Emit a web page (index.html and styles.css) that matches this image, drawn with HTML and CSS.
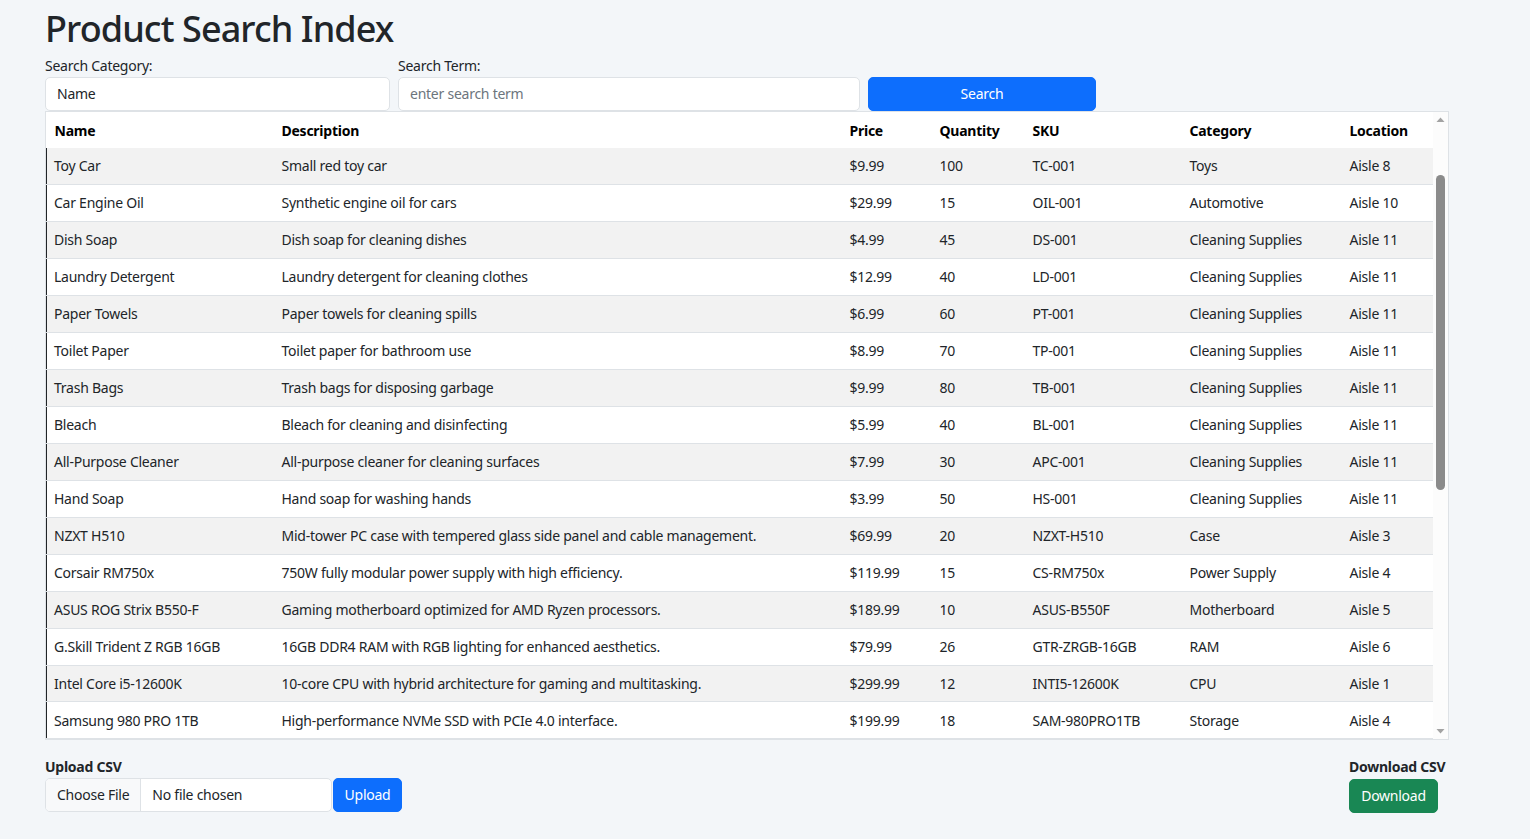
FILE: index.html
```html
<!DOCTYPE html>
<html lang="en">
<head>
<meta charset="utf-8">
<title>Product Search Index</title>
<link rel="stylesheet" href="styles.css">
</head>
<body>
<div class="page">
  <h1 class="title">Product Search Index</h1>
  <div class="search-row">
    <div class="field field-cat">
      <label class="label">Search Category:</label>
      <div class="control">Name</div>
    </div>
    <div class="field field-term">
      <label class="label">Search Term:</label>
      <input class="control input" type="text" placeholder="enter search term">
    </div>
    <div class="field field-btn">
      <button class="btn btn-primary btn-search">Search</button>
    </div>
  </div>
  <div class="table-wrap">
    <div class="scroller">
    <table class="table">
      <colgroup>
        <col class="c-name"><col class="c-desc"><col class="c-price"><col class="c-qty"><col class="c-sku"><col class="c-cat"><col class="c-loc">
      </colgroup>
      <thead>
        <tr><th>Name</th><th>Description</th><th>Price</th><th>Quantity</th><th>SKU</th><th>Category</th><th>Location</th></tr>
      </thead>
      <tbody>
        <tr><td>Toy Car</td><td>Small red toy car</td><td>$9.99</td><td>100</td><td>TC-001</td><td>Toys</td><td>Aisle 8</td></tr>
        <tr><td>Car Engine Oil</td><td>Synthetic engine oil for cars</td><td>$29.99</td><td>15</td><td>OIL-001</td><td>Automotive</td><td>Aisle 10</td></tr>
        <tr><td>Dish Soap</td><td>Dish soap for cleaning dishes</td><td>$4.99</td><td>45</td><td>DS-001</td><td>Cleaning Supplies</td><td>Aisle 11</td></tr>
        <tr><td>Laundry Detergent</td><td>Laundry detergent for cleaning clothes</td><td>$12.99</td><td>40</td><td>LD-001</td><td>Cleaning Supplies</td><td>Aisle 11</td></tr>
        <tr><td>Paper Towels</td><td>Paper towels for cleaning spills</td><td>$6.99</td><td>60</td><td>PT-001</td><td>Cleaning Supplies</td><td>Aisle 11</td></tr>
        <tr><td>Toilet Paper</td><td>Toilet paper for bathroom use</td><td>$8.99</td><td>70</td><td>TP-001</td><td>Cleaning Supplies</td><td>Aisle 11</td></tr>
        <tr><td>Trash Bags</td><td>Trash bags for disposing garbage</td><td>$9.99</td><td>80</td><td>TB-001</td><td>Cleaning Supplies</td><td>Aisle 11</td></tr>
        <tr><td>Bleach</td><td>Bleach for cleaning and disinfecting</td><td>$5.99</td><td>40</td><td>BL-001</td><td>Cleaning Supplies</td><td>Aisle 11</td></tr>
        <tr><td>All-Purpose Cleaner</td><td>All-purpose cleaner for cleaning surfaces</td><td>$7.99</td><td>30</td><td>APC-001</td><td>Cleaning Supplies</td><td>Aisle 11</td></tr>
        <tr><td>Hand Soap</td><td>Hand soap for washing hands</td><td>$3.99</td><td>50</td><td>HS-001</td><td>Cleaning Supplies</td><td>Aisle 11</td></tr>
        <tr><td>NZXT H510</td><td>Mid-tower PC case with tempered glass side panel and cable management.</td><td>$69.99</td><td>20</td><td>NZXT-H510</td><td>Case</td><td>Aisle 3</td></tr>
        <tr><td>Corsair RM750x</td><td>750W fully modular power supply with high efficiency.</td><td>$119.99</td><td>15</td><td>CS-RM750x</td><td>Power Supply</td><td>Aisle 4</td></tr>
        <tr><td>ASUS ROG Strix B550-F</td><td>Gaming motherboard optimized for AMD Ryzen processors.</td><td>$189.99</td><td>10</td><td>ASUS-B550F</td><td>Motherboard</td><td>Aisle 5</td></tr>
        <tr><td>G.Skill Trident Z RGB 16GB</td><td>16GB DDR4 RAM with RGB lighting for enhanced aesthetics.</td><td>$79.99</td><td>26</td><td>GTR-ZRGB-16GB</td><td>RAM</td><td>Aisle 6</td></tr>
        <tr><td>Intel Core i5-12600K</td><td>10-core CPU with hybrid architecture for gaming and multitasking.</td><td>$299.99</td><td>12</td><td>INTI5-12600K</td><td>CPU</td><td>Aisle 1</td></tr>
        <tr><td>Samsung 980 PRO 1TB</td><td>High-performance NVMe SSD with PCIe 4.0 interface.</td><td>$199.99</td><td>18</td><td>SAM-980PRO1TB</td><td>Storage</td><td>Aisle 4</td></tr>
        <tr><td>NVIDIA GeForce RTX 3070</td><td>High-end graphics card for 1440p and 4K gaming.</td><td>$499.99</td><td>8</td><td>NV-RTX3070</td><td>GPU</td><td>Aisle 2</td></tr>
        <tr><td>Cooler Master Hyper 212</td><td>Air CPU cooler with four heat pipes.</td><td>$39.99</td><td>35</td><td>CM-H212</td><td>Cooling</td><td>Aisle 7</td></tr>
        <tr><td>Logitech G502</td><td>Wired gaming mouse with adjustable weights.</td><td>$49.99</td><td>40</td><td>LOG-G502</td><td>Peripherals</td><td>Aisle 9</td></tr>
        <tr><td>Razer BlackWidow V3</td><td>Mechanical gaming keyboard with RGB lighting.</td><td>$139.99</td><td>22</td><td>RZ-BWV3</td><td>Peripherals</td><td>Aisle 9</td></tr>
        <tr><td>Dell S2721DGF</td><td>27-inch QHD gaming monitor with 165Hz refresh rate.</td><td>$349.99</td><td>9</td><td>DELL-S2721</td><td>Monitor</td><td>Aisle 12</td></tr>
        <tr><td>WD Blue 2TB HDD</td><td>2TB 7200 RPM hard drive for mass storage.</td><td>$54.99</td><td>30</td><td>WD-BLUE2TB</td><td>Storage</td><td>Aisle 4</td></tr>
        <tr><td>Arctic MX-4</td><td>High-performance thermal compound.</td><td>$7.99</td><td>60</td><td>ARC-MX4</td><td>Cooling</td><td>Aisle 7</td></tr>
        <tr><td>TP-Link Archer T6E</td><td>Dual-band PCIe Wi-Fi adapter.</td><td>$39.99</td><td>25</td><td>TPL-T6E</td><td>Networking</td><td>Aisle 13</td></tr>
        <tr><td>Noctua NF-A12x25</td><td>120mm premium quiet case fan.</td><td>$29.99</td><td>45</td><td>NOC-A12</td><td>Cooling</td><td>Aisle 7</td></tr>
        <tr><td>HyperX Cloud II</td><td>Gaming headset with 7.1 virtual surround sound.</td><td>$99.99</td><td>18</td><td>HX-CLOUD2</td><td>Peripherals</td><td>Aisle 9</td></tr>
      </tbody>
    </table>
    </div>
    <div class="fake-scrollbar" aria-hidden="true">
      <svg class="sb-arrow" width="15" height="15" viewBox="0 0 15 15"><polygon points="3.5,10 11.5,10 7.5,5.5" fill="#a3a3a3"/></svg>
      <div class="sb-track"><div class="sb-thumb"></div></div>
      <svg class="sb-arrow" width="15" height="15" viewBox="0 0 15 15"><polygon points="3.5,5 11.5,5 7.5,9.5" fill="#a3a3a3"/></svg>
    </div>
  </div>
  <div class="bottom-row">
    <div class="upload">
      <div class="bold-label">Upload CSV</div>
      <div class="upload-controls">
        <div class="file-input"><span class="file-btn">Choose File</span><span class="file-name">No file chosen</span></div>
        <button class="btn btn-primary btn-upload">Upload</button>
      </div>
    </div>
    <div class="download">
      <div class="bold-label">Download CSV</div>
      <button class="btn btn-success btn-download">Download</button>
    </div>
  </div>
</div>
</body>
</html>
```
FILE: styles.css
```css
* { box-sizing: border-box; }
html, body { margin: 0; padding: 0; }
body {
  background: #f3f6f9;
  color: #212529;
  font-family: "Noto Sans", "Open Sans", sans-serif;
  font-size: 14px;
  line-height: 21.6px;
  letter-spacing: -0.25px;
}
.page {
  width: 1404px;
  margin-left: 45px;
}
.title {
  margin: 6.5px 0 5.7px 0;
  font-size: 36px;
  font-weight: 500;
  line-height: 43.2px;
  letter-spacing: -0.9px;
}
.search-row {
  display: flex;
  gap: 8px;
  align-items: flex-end;
}
.field { display: flex; flex-direction: column; }
.field-cat { width: 345px; }
.field-term { width: 462px; }
.field-btn { width: 228px; }
.label { display: block; line-height: 21.6px; }
.control {
  height: 34px;
  border: 1px solid #dee2e6;
  border-radius: 5px;
  background: #fff;
  padding: 0 11px;
  font: inherit;
  letter-spacing: inherit;
  color: #212529;
  display: flex;
  align-items: center;
}
.input { width: 100%; outline: none; }
.input::placeholder { color: #6c757d; }
.btn {
  font: inherit;
  letter-spacing: inherit;
  border: 1px solid transparent;
  border-radius: 5px;
  color: #fff;
  cursor: pointer;
  height: 34px;
  padding: 0 11px;
}
.btn-primary { background: #0d6efd; border-color: #0d6efd; }
.btn-success { background: #198754; border-color: #198754; }
.btn-search { width: 100%; }
.table-wrap {
  display: flex;
  height: 629px;
  border: 1px solid #dee2e6;
  background: #fff;
}
.scroller {
  flex: 1;
  min-width: 0;
  overflow-y: auto;
  scrollbar-width: none;
}
.scroller::-webkit-scrollbar { display: none; }
.fake-scrollbar {
  width: 15px;
  flex: none;
  background: #fcfcfc;
  display: flex;
  flex-direction: column;
}
.sb-arrow { display: block; flex: none; }
.sb-track { flex: 1; display: flex; justify-content: center; }
.sb-thumb {
  width: 9px;
  height: 315px;
  margin-top: 48px;
  border-radius: 5px;
  background: #8b8b8b;
}
.table {
  width: 100%;
  table-layout: fixed;
  border-collapse: collapse;
}
.c-name { width: 227px; }
.c-desc { width: 568px; }
.c-price { width: 90px; }
.c-qty { width: 93px; }
.c-sku { width: 157px; }
.c-cat { width: 160px; }
.c-loc { width: 92px; }
.table th, .table td {
  padding: 7.2px 7px 7.2px 8px;
  text-align: left;
  white-space: nowrap;
  overflow: hidden;
  border-bottom: 1px solid #dee2e6;
  line-height: 21.6px;
}
.table thead th {
  position: sticky;
  top: 0;
  background: #fff;
  color: #000;
  font-weight: 700;
  border-bottom: 0;
  padding-top: 8.2px;
  padding-bottom: 6.2px;
  z-index: 1;
}
.table tbody tr:nth-child(odd) td { background: #f2f2f2; }
.table tbody td:first-child { border-left: 1px solid #212529; padding-left: 7px; }
.bottom-row {
  display: flex;
  justify-content: space-between;
  align-items: flex-start;
  margin-top: 16px;
}
.bold-label { font-weight: 700; line-height: 21.6px; white-space: nowrap; }
.upload-controls { display: flex; gap: 1px; }
.file-input {
  display: flex;
  height: 34px;
  width: 287px;
  border: 1px solid #dee2e6;
  border-radius: 5px;
  background: #fff;
  overflow: hidden;
}
.file-btn {
  background: #f8f9fa;
  border-right: 1px solid #dee2e6;
  padding: 0 11px;
  display: flex;
  align-items: center;
  white-space: nowrap;
}
.file-name { padding: 0 11px; display: flex; align-items: center; white-space: nowrap; }
.btn-upload { width: 69px; padding: 0; }
.download { display: flex; flex-direction: column; align-items: flex-start; width: 100px; }
.btn-download { width: 89px; padding: 0; margin-top: 1px; }
```
